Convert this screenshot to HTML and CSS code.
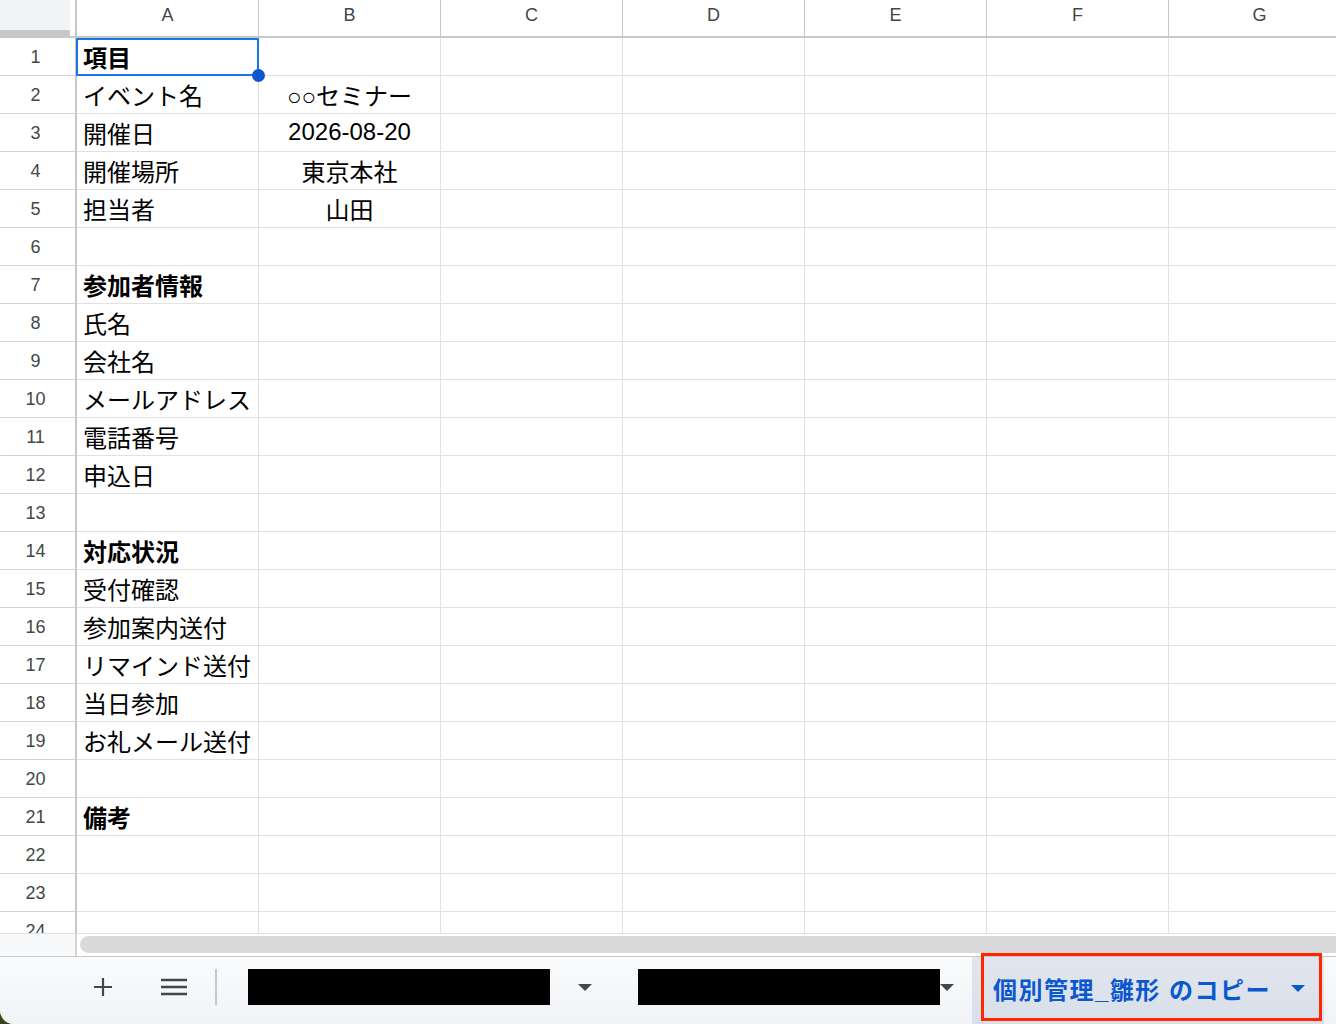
FILE: index.html
```html
<!DOCTYPE html>
<html lang="ja">
<head>
    <meta charset="UTF-8">
    <meta name="viewport" content="width=device-width, initial-scale=1.0">
    <title>個別管理_雛形 のコピー</title>
    <link rel="stylesheet" href="styles.css">
</head>
<body>
    <div class="app">
        <div class="sheet">
            <div class="grid">
                <div class="corner"></div>
                <div class="col-head">A</div><div class="col-head">B</div><div class="col-head">C</div><div class="col-head">D</div><div class="col-head">E</div><div class="col-head">F</div><div class="col-head">G</div>

                <div class="row-head">1</div><div class="cell bold">項目</div><div class="cell"></div><div class="cell"></div><div class="cell"></div><div class="cell"></div><div class="cell"></div><div class="cell"></div>
                <div class="row-head">2</div><div class="cell">イベント名</div><div class="cell center">○○セミナー</div><div class="cell"></div><div class="cell"></div><div class="cell"></div><div class="cell"></div><div class="cell"></div>
                <div class="row-head">3</div><div class="cell">開催日</div><div class="cell center">2026-08-20</div><div class="cell"></div><div class="cell"></div><div class="cell"></div><div class="cell"></div><div class="cell"></div>
                <div class="row-head">4</div><div class="cell">開催場所</div><div class="cell center">東京本社</div><div class="cell"></div><div class="cell"></div><div class="cell"></div><div class="cell"></div><div class="cell"></div>
                <div class="row-head">5</div><div class="cell">担当者</div><div class="cell center">山田</div><div class="cell"></div><div class="cell"></div><div class="cell"></div><div class="cell"></div><div class="cell"></div>
                <div class="row-head">6</div><div class="cell"></div><div class="cell"></div><div class="cell"></div><div class="cell"></div><div class="cell"></div><div class="cell"></div><div class="cell"></div>
                <div class="row-head">7</div><div class="cell bold">参加者情報</div><div class="cell"></div><div class="cell"></div><div class="cell"></div><div class="cell"></div><div class="cell"></div><div class="cell"></div>
                <div class="row-head">8</div><div class="cell">氏名</div><div class="cell"></div><div class="cell"></div><div class="cell"></div><div class="cell"></div><div class="cell"></div><div class="cell"></div>
                <div class="row-head">9</div><div class="cell">会社名</div><div class="cell"></div><div class="cell"></div><div class="cell"></div><div class="cell"></div><div class="cell"></div><div class="cell"></div>
                <div class="row-head">10</div><div class="cell">メールアドレス</div><div class="cell"></div><div class="cell"></div><div class="cell"></div><div class="cell"></div><div class="cell"></div><div class="cell"></div>
                <div class="row-head">11</div><div class="cell">電話番号</div><div class="cell"></div><div class="cell"></div><div class="cell"></div><div class="cell"></div><div class="cell"></div><div class="cell"></div>
                <div class="row-head">12</div><div class="cell">申込日</div><div class="cell"></div><div class="cell"></div><div class="cell"></div><div class="cell"></div><div class="cell"></div><div class="cell"></div>
                <div class="row-head">13</div><div class="cell"></div><div class="cell"></div><div class="cell"></div><div class="cell"></div><div class="cell"></div><div class="cell"></div><div class="cell"></div>
                <div class="row-head">14</div><div class="cell bold">対応状況</div><div class="cell"></div><div class="cell"></div><div class="cell"></div><div class="cell"></div><div class="cell"></div><div class="cell"></div>
                <div class="row-head">15</div><div class="cell">受付確認</div><div class="cell"></div><div class="cell"></div><div class="cell"></div><div class="cell"></div><div class="cell"></div><div class="cell"></div>
                <div class="row-head">16</div><div class="cell">参加案内送付</div><div class="cell"></div><div class="cell"></div><div class="cell"></div><div class="cell"></div><div class="cell"></div><div class="cell"></div>
                <div class="row-head">17</div><div class="cell">リマインド送付</div><div class="cell"></div><div class="cell"></div><div class="cell"></div><div class="cell"></div><div class="cell"></div><div class="cell"></div>
                <div class="row-head">18</div><div class="cell">当日参加</div><div class="cell"></div><div class="cell"></div><div class="cell"></div><div class="cell"></div><div class="cell"></div><div class="cell"></div>
                <div class="row-head">19</div><div class="cell">お礼メール送付</div><div class="cell"></div><div class="cell"></div><div class="cell"></div><div class="cell"></div><div class="cell"></div><div class="cell"></div>
                <div class="row-head">20</div><div class="cell"></div><div class="cell"></div><div class="cell"></div><div class="cell"></div><div class="cell"></div><div class="cell"></div><div class="cell"></div>
                <div class="row-head">21</div><div class="cell bold">備考</div><div class="cell"></div><div class="cell"></div><div class="cell"></div><div class="cell"></div><div class="cell"></div><div class="cell"></div>
                <div class="row-head">22</div><div class="cell"></div><div class="cell"></div><div class="cell"></div><div class="cell"></div><div class="cell"></div><div class="cell"></div><div class="cell"></div>
                <div class="row-head">23</div><div class="cell"></div><div class="cell"></div><div class="cell"></div><div class="cell"></div><div class="cell"></div><div class="cell"></div><div class="cell"></div>
                <div class="row-head">24</div><div class="cell"></div><div class="cell"></div><div class="cell"></div><div class="cell"></div><div class="cell"></div><div class="cell"></div><div class="cell"></div>
            </div>

            <!-- active cell A1 -->
            <div class="selection"><span class="fill-handle"></span></div>
        </div>

        <div class="hscroll">
            <div class="hscroll-gutter"></div>
            <div class="hscroll-thumb"></div>
        </div>

        <div class="tabbar">
            <button class="tb-btn" title="シートを追加">
                <svg width="20" height="20" viewBox="0 0 20 20"><path d="M10 1v18M1 10h18" stroke="#444746" stroke-width="2.2" fill="none"/></svg>
            </button>
            <button class="tb-btn tb-menu" title="すべてのシート">
                <svg width="26" height="18" viewBox="0 0 26 18"><path d="M0 2h26M0 9h26M0 16h26" stroke="#444746" stroke-width="2.4" fill="none"/></svg>
            </button>
            <span class="tb-divider"></span>

            <div class="tab">
                <span class="redact"></span>
                <svg class="caret" width="14" height="7" viewBox="0 0 14 7"><path d="M0 0h14L7 7z" fill="#444746"/></svg>
            </div>
            <div class="tab tab-second">
                <span class="redact"></span>
                <svg class="caret" width="14" height="7" viewBox="0 0 14 7"><path d="M0 0h14L7 7z" fill="#444746"/></svg>
            </div>
            <div class="tab active">
                <span class="tab-name">個別管理_雛形 のコピー</span>
                <svg class="caret" width="14" height="7" viewBox="0 0 14 7"><path d="M0 0h14L7 7z" fill="#0b57d0"/></svg>
            </div>
        </div>
    </div>
</body>
</html>
```

FILE: styles.css
```css
body {
    margin: 0;
    background-color: #34461f;
    font-family: "Liberation Sans", "Noto Sans CJK JP", sans-serif;
    overflow: hidden;
}

.app {
    width: 1336px;
    height: 1024px;
    background-color: #ffffff;
    border-bottom-left-radius: 14px;
    overflow: hidden;
    display: flex;
    flex-direction: column;
}

/* grid */

.sheet {
    position: relative;
    height: 933px;
    overflow: hidden;
    flex: none;
}

.grid {
    display: grid;
    grid-template-columns: 77px repeat(7, 182px);
    grid-template-rows: 38px;
    grid-auto-rows: 38px;
}

.corner {
    position: relative;
    border-right: 2px solid #c7c7c7;
    border-bottom: 2px solid #c7c7c7;
}

.corner::before {
    content: "";
    position: absolute;
    left: 0;
    top: 0;
    width: 70px;
    height: 30px;
    background-color: #f1f3f4;
    border-bottom: 6px solid #c7c7c7;
}

.col-head {
    display: flex;
    align-items: center;
    justify-content: center;
    padding-bottom: 5px;
    border-right: 1px solid #c7c7c7;
    border-bottom: 2px solid #c7c7c7;
    font-size: 18px;
    color: #444746;
}

.row-head {
    display: flex;
    align-items: center;
    justify-content: center;
    padding-top: 1px;
    padding-right: 4px;
    border-right: 2px solid #c7c7c7;
    border-bottom: 1px solid #d3d3d3;
    font-size: 18px;
    color: #444746;
}

.cell {
    display: flex;
    align-items: center;
    padding: 0 6px 1px;
    border-right: 1px solid #e1e1e1;
    border-bottom: 1px solid #e1e1e1;
    font-size: 24px;
    color: #000000;
    white-space: nowrap;
}

.cell.center {
    justify-content: center;
}

.cell.bold {
    font-weight: bold;
}

.selection {
    position: absolute;
    left: 76px;
    top: 38px;
    width: 183px;
    height: 38px;
    border: 2px solid #1a73e8;
    box-sizing: border-box;
    pointer-events: none;
}

.fill-handle {
    position: absolute;
    right: -8px;
    bottom: -8px;
    width: 13px;
    height: 13px;
    border-radius: 50%;
    background-color: #0b57d0;
}

/* horizontal scrollbar */

.hscroll {
    display: flex;
    height: 22px;
    border-top: 1px solid #e1e1e1;
    background-color: #ffffff;
    flex: none;
}

.hscroll-gutter {
    width: 75px;
    background-color: #f8f9fa;
    border-right: 2px solid #d3d3d3;
}

.hscroll-thumb {
    flex: 1;
    margin: 2px 0 3px 3px;
    background-color: #dadada;
    border-radius: 9px 0 0 9px;
}

/* sheet tabs */

.tabbar {
    flex: 1;
    display: flex;
    align-items: center;
    padding-left: 79px;
    padding-bottom: 7px;
    border-top: 1px solid #c7c7c7;
    background: linear-gradient(#f9fbfd, #f1f3f6);
}

.tb-btn {
    width: 48px;
    height: 40px;
    display: flex;
    align-items: center;
    justify-content: center;
    padding: 0;
    border: none;
    background: none;
    cursor: pointer;
}

.tb-menu {
    margin-left: 23px;
}

.tb-divider {
    width: 2px;
    height: 36px;
    margin-left: 17px;
    background-color: #c7c7c7;
}

.tab {
    display: flex;
    align-items: center;
    margin-left: 31px;
}

.tab-second {
    margin-left: 46px;
}

.redact {
    display: block;
    width: 302px;
    height: 36px;
    background-color: #000000;
}

.tab .caret {
    margin-left: 28px;
}

.tab-second .caret {
    margin-left: 0;
}

.tab.active {
    position: relative;
    align-self: stretch;
    margin-left: 18px;
    margin-bottom: -7px;
    padding-left: 21px;
    padding-bottom: 4px;
    width: 352px;
    box-sizing: border-box;
    background: linear-gradient(#e1e6ee, #d9dfe8);
}

.tab.active::after {
    content: "";
    position: absolute;
    left: 9px;
    top: -4px;
    width: 341px;
    height: 68px;
    border: 3px solid #ff2600;
    box-sizing: border-box;
}

.tab-name {
    font-size: 24px;
    font-weight: bold;
    letter-spacing: 1.5px;
    color: #0b57d0;
    white-space: nowrap;
}

.tab.active .caret {
    margin-left: 20px;
}
```
